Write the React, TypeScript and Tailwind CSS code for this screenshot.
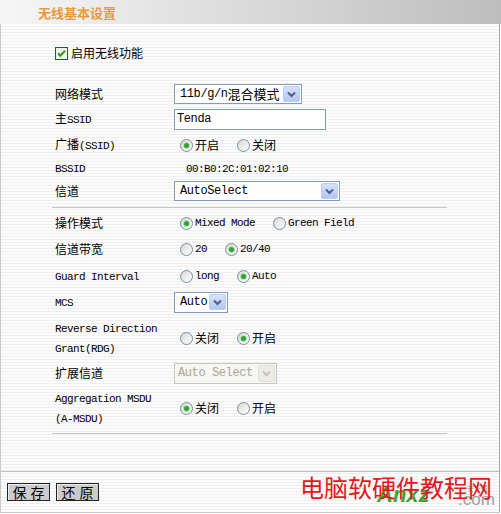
import type { ReactNode } from 'react';

const cjk = "font-['Noto_Sans_CJK_SC',sans-serif]";
const mono = "font-['Liberation_Mono','Noto_Sans_CJK_SC',monospace] text-[11px] tracking-[-0.6px]";
const field = "font-['Liberation_Mono','Noto_Sans_CJK_SC',monospace] text-[12px] tracking-[-0.4px]";

const A = ({ children }: { children: ReactNode }) => <span className={mono}>{children}</span>;

const Radio = ({ on, children }: { on?: boolean; children: ReactNode }) => (
  <span className="flex items-center gap-[2px]">
    <span className="w-[13px] h-[13px] rounded-full border border-[#7a8ea3] bg-linear-to-br from-[#d8d8d2] to-white flex items-center justify-center">
      {on && <span className="w-[5px] h-[5px] rounded-full bg-[#2fa52f] shadow-[0_0_0_1px_#b9e2b9]" />}
    </span>
    {children}
  </span>
);

const Radios = ({ children }: { children: ReactNode }) => (
  <div className="flex items-center gap-[18px] pl-[6px]">{children}</div>
);

const Chevron = ({ disabled }: { disabled?: boolean }) => (
  <span
    className={
      disabled
        ? 'w-[17px] h-[17px] mr-[1px] rounded-[2px] bg-[#ecebe4] border border-[#e0dfd8] flex items-center justify-center'
        : 'w-[17px] h-[16px] mr-[1px] rounded-[2px] bg-linear-to-b from-[#d6e1fb] to-[#b3c6f3] border border-[#bcccf4] flex items-center justify-center'
    }
  >
    <svg width="9" height="7" viewBox="0 0 9 7">
      <path d="M1 1.5 4.5 5 8 1.5" fill="none" stroke={disabled ? '#c4c3bb' : '#4d6185'} strokeWidth="2" />
    </svg>
  </span>
);

const Row = ({ className, label, children }: { className: string; label: ReactNode; children?: ReactNode }) => (
  <div className={`flex items-center pl-[3px] ${className}`}>
    <div className="w-[119px] shrink-0">{label}</div>
    {children}
  </div>
);

const Divider = ({ className }: { className: string }) => <div className={`h-px w-[395px] bg-[#c6c6c6] ${className}`} />;

const Btn = ({ a, b }: { a: string; b: string }) => (
  <button className="w-[43px] h-[18px] border border-[#222] bg-[#cbcbcb] shadow-[inset_1px_1px_0_#ededed] text-[14px] leading-none flex items-center justify-center gap-[4px]">
    <span>{a}</span>
    <span>{b}</span>
  </button>
);

export default function App() {
  return (
    <div className={`w-[501px] h-[514px] bg-white text-[12px] text-black ${cjk}`}>
      <div className="h-[24px] w-[501px] bg-linear-to-r from-[#f6f6f6] via-[#dadada] to-[#bdbdbd] pl-[38px] flex items-center">
        <span className="text-[13px] font-bold text-[#e89a3a] leading-none">无线基本设置</span>
      </div>

      <div className="w-[500px] border-l border-r border-b border-l-[#c8c8c8] border-r-[#a9a9a9] border-b-[#c8c8c8] bg-[repeating-linear-gradient(to_bottom,#fcfcfc_0px,#fcfcfc_2px,#efefef_2px,#efefef_3px)]">
        <div className="h-[447px] pl-[51px] pt-[20px]">
          <div className="h-[18px] flex items-center gap-[3px] pl-[3px]">
            <svg width="13" height="13" viewBox="0 0 13 13">
              <rect x="0.5" y="0.5" width="12" height="12" fill="#f4f4ee" stroke="#1c5180" />
              <path d="M3 6.3 5.3 8.8 10 3.8" fill="none" stroke="#21a121" strokeWidth="2" />
            </svg>
            <span>启用无线功能</span>
          </div>

          <Row className="mt-[20px] h-[24px]" label="网络模式">
            <div className="w-[128px] h-[20px] border border-[#7f9db9] bg-white flex items-center justify-between pl-[5px]">
              <span className="flex items-center">
                <span className={field}>11b/g/n</span>
                <span className="text-[13px]">混合模式</span>
              </span>
              <Chevron />
            </div>
          </Row>
          <Row className="h-[26px]" label={<>主<A>SSID</A></>}>
            <div className="w-[152px] h-[21px] border border-[#7f9db9] bg-white flex items-center pl-[2px]">
              <span className={field}>Tenda</span>
            </div>
          </Row>
          <Row className="h-[26px]" label={<>广播<A>(SSID)</A></>}>
            <Radios>
              <Radio on>开启</Radio>
              <Radio>关闭</Radio>
            </Radios>
          </Row>
          <Row className="h-[20px]" label={<A>BSSID</A>}>
            <span className="pl-[12px]">
              <A>00:B0:2C:01:02:10</A>
            </span>
          </Row>
          <Row className="h-[26px]" label="信道">
            <div className="w-[166px] h-[20px] border border-[#7f9db9] bg-white flex items-center justify-between pl-[5px]">
              <span className={field}>AutoSelect</span>
              <Chevron />
            </div>
          </Row>
          <Divider className="mt-[3px] mb-[2px]" />

          <Row className="h-[26px]" label="操作模式">
            <Radios>
              <Radio on><A>Mixed Mode</A></Radio>
              <Radio><A>Green Field</A></Radio>
            </Radios>
          </Row>
          <Row className="h-[26px]" label="信道带宽">
            <Radios>
              <Radio><A>20</A></Radio>
              <Radio on><A>20/40</A></Radio>
            </Radios>
          </Row>
          <Row className="h-[28px]" label={<A>Guard Interval</A>}>
            <Radios>
              <Radio><A>long</A></Radio>
              <Radio on><A>Auto</A></Radio>
            </Radios>
          </Row>
          <Row className="h-[24px]" label={<A>MCS</A>}>
            <div className="w-[54px] h-[21px] border border-[#7f9db9] bg-white flex items-center justify-between pl-[5px]">
              <span className={field}>Auto</span>
              <Chevron />
            </div>
          </Row>
          <Row
            className="h-[48px]"
            label={
              <div className="leading-[18px]">
                <div><A>Reverse Direction</A></div>
                <div><A>Grant(RDG)</A></div>
              </div>
            }
          >
            <Radios>
              <Radio>关闭</Radio>
              <Radio on>开启</Radio>
            </Radios>
          </Row>
          <Row className="h-[22px]" label="扩展信道">
            <div className="w-[103px] h-[21px] border border-[#c9c7ba] bg-[#f6f6f2] flex items-center justify-between pl-[3px]">
              <span className={`${field} text-[#aca899]`}>Auto Select</span>
              <Chevron disabled />
            </div>
          </Row>
          <Row
            className="h-[48px]"
            label={
              <div className="leading-[18px]">
                <div><A>Aggregation MSDU</A></div>
                <div><A>(A-MSDU)</A></div>
              </div>
            }
          >
            <Radios>
              <Radio on>关闭</Radio>
              <Radio>开启</Radio>
            </Radios>
          </Row>
          <Divider className="mt-[1px]" />
        </div>

        <div className="relative h-[41px] border-t border-[#bdbdbd] pl-[6px] pt-[11px] flex gap-[6px]">
          <Btn a="保" b="存" />
          <Btn a="还" b="原" />

          <span className="absolute left-[376px] top-[12px] text-[22px] leading-none font-bold italic text-[#3aa63a] font-['Liberation_Sans',sans-serif]">
            Anxz
          </span>
          <span className="absolute left-[466px] top-[13px] text-[7px] leading-none text-[#9a9a9a]">安下载</span>
          <span className="absolute left-[457px] top-[19px] text-[17px] leading-none text-[#a0a0a0] font-['Liberation_Sans',sans-serif]">
            .com
          </span>
          <span className="absolute left-[299px] top-[3px] text-[24px] leading-none text-[#e3171c] whitespace-nowrap">
            电脑软硬件教程网
          </span>
        </div>
      </div>
    </div>
  );
}
